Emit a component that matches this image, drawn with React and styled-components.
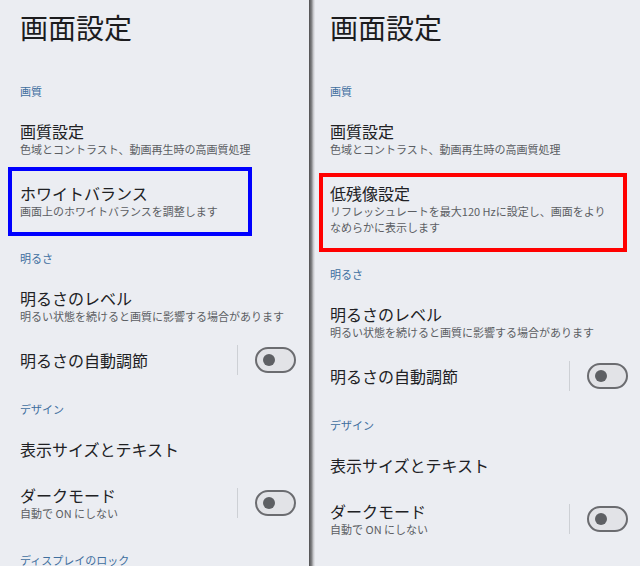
import styled, { createGlobalStyle } from "styled-components";

const GlobalStyle = createGlobalStyle`
  html, body {
    margin: 0;
    padding: 0;
    background: #ebedf2;
  }
  body {
    font-family: "Noto Sans CJK JP", "Noto Sans", sans-serif;
    overflow: hidden;
  }
`;

const Screen = styled.div`
  display: flex;
  width: 640px;
  height: 566px;
  overflow: hidden;
`;

const Panel = styled.div`
  flex: none;
  width: ${(p) => p.$width}px;
  box-sizing: border-box;
  padding: 0 ${(p) => p.$right}px 0 ${(p) => p.$left}px;
  background: #ebedf2;
  overflow: hidden;
`;

const Shadow = styled.div`
  flex: none;
  width: 6px;
  background: linear-gradient(to right, #4e4e50, #7d7e80 40%, #c9cace 75%, #e8eaef);
`;

const PageTitle = styled.h1`
  margin: 0;
  padding: 8px 0 19px;
  font-size: 28px;
  line-height: 38px;
  font-weight: 400;
  color: #1c1c1e;
`;

const SectionHeader = styled.div`
  padding: 18px 0 9px;
  font-size: 11px;
  line-height: 16px;
  color: #3f6f9f;
`;

const Item = styled.div`
  position: relative;
  display: flex;
  align-items: center;
  padding: 13px 0;
`;

const ItemText = styled.div`
  flex: 1;
  min-width: 0;
`;

const ItemTitle = styled.div`
  font-size: 16px;
  line-height: 20px;
  color: #202124;
`;

const ItemSub = styled.div`
  font-size: 11px;
  line-height: 16px;
  color: #5b5e63;
`;

const Controls = styled.div`
  display: flex;
  align-items: center;
  height: 20px;
`;

const Divider = styled.div`
  width: 1px;
  height: 30px;
  flex: none;
  background: #cdd0d5;
  margin-right: 17px;
`;

const Switch = styled.div`
  position: relative;
  flex: none;
  width: 41px;
  height: 26px;
  box-sizing: border-box;
  border: 2px solid #6b6c70;
  border-radius: 13px;
  background: #e2e3e7;

  &::after {
    content: "";
    position: absolute;
    left: 6px;
    top: 5px;
    width: 12px;
    height: 12px;
    border-radius: 50%;
    background: #5e6064;
  }
`;

const Highlight = styled.div`
  position: absolute;
  left: ${(p) => p.$left}px;
  top: ${(p) => p.$top}px;
  width: ${(p) => p.$w}px;
  height: ${(p) => p.$h}px;
  box-sizing: border-box;
  border: 4px solid ${(p) => p.$color};
  pointer-events: none;
`;

const leftBox = { $left: -12, $top: -3, $w: 244, $h: 69, $color: "#0000ff" };
const rightBox = { $left: -11, $top: 3, $w: 308, $h: 79, $color: "#ff0000" };

function SettingItem({ title, sub, toggle, box }) {
  return (
    <Item>
      <ItemText>
        <ItemTitle>{title}</ItemTitle>
        {sub && <ItemSub>{sub}</ItemSub>}
      </ItemText>
      {toggle && (
        <Controls>
          <Divider />
          <Switch />
        </Controls>
      )}
      {box && <Highlight {...box} />}
    </Item>
  );
}

function DisplaySettings({ width, left, right, feature, box }) {
  return (
    <Panel $width={width} $left={left} $right={right}>
      <PageTitle>画面設定</PageTitle>
      <SectionHeader>画質</SectionHeader>
      <SettingItem title="画質設定" sub="色域とコントラスト、動画再生時の高画質処理" />
      <SettingItem title={feature.title} sub={feature.sub} box={box} />
      <SectionHeader>明るさ</SectionHeader>
      <SettingItem
        title="明るさのレベル"
        sub="明るい状態を続けると画質に影響する場合があります"
      />
      <SettingItem title="明るさの自動調節" toggle />
      <SectionHeader>デザイン</SectionHeader>
      <SettingItem title="表示サイズとテキスト" />
      <SettingItem title="ダークモード" sub="自動で ON にしない" toggle />
      <SectionHeader>ディスプレイのロック</SectionHeader>
    </Panel>
  );
}

export default function App() {
  return (
    <>
      <GlobalStyle />
      <Screen>
        <DisplaySettings
          width={309}
          left={20}
          right={13}
          box={leftBox}
          feature={{
            title: "ホワイトバランス",
            sub: "画面上のホワイトバランスを調整します",
          }}
        />
        <Shadow />
        <DisplaySettings
          width={325}
          left={15}
          right={12}
          box={rightBox}
          feature={{
            title: "低残像設定",
            sub: (
              <>
                リフレッシュレートを最大120 Hzに設定し、画面をより
                <br />
                なめらかに表示します
              </>
            ),
          }}
        />
      </Screen>
    </>
  );
}
